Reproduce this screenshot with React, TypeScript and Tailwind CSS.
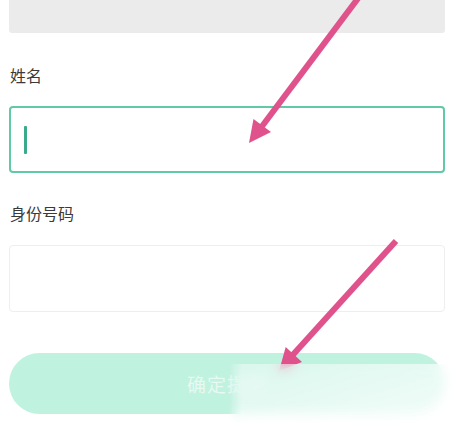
import React from "react";

export default function App() {
  return (
    <div
      className="relative w-[455px] h-[427px] overflow-hidden bg-white"
      style={{ fontFamily: '"Noto Sans CJK SC", "Noto Sans", sans-serif' }}
    >
      <div className="flex flex-col px-[9px] pr-[10px]">
        <div className="h-[33px] bg-[#ebebeb] rounded-b-[3px]" />
        <div className="mt-[31px] h-[22px] flex items-center pl-[1px] text-[16px] leading-none text-[#3a3a3a]">
          姓名
        </div>
        <div className="mt-[20px] h-[67px] rounded-[4px] border-2 border-[#62c9a6] flex items-center pl-[13px]">
          <div className="w-[3px] h-[28px] bg-[#3aaa8c] rounded-[1px]" />
        </div>
        <div className="mt-[29px] h-[22px] flex items-center pl-[1px] text-[16px] leading-none text-[#3a3a3a]">
          身份号码
        </div>
        <div className="mt-[21px] h-[67px] rounded-[4px] border border-[#eeeeee]" />
        <div className="mt-[41px] h-[61px] rounded-full bg-[#c0f2e0] flex items-center justify-center pt-[2px] text-[19px] tracking-[1px] text-[#e6f9f2]">
          确定提交
        </div>
      </div>

      <svg className="absolute inset-0" width="455" height="427" viewBox="0 0 455 427">
        <line x1="359" y1="-3" x2="260" y2="129" stroke="#e0528b" strokeWidth="6" />
        <polygon points="249,143 271,132 253.5,119" fill="#e0528b" />
        <line x1="396" y1="241" x2="290" y2="358" stroke="#e0528b" strokeWidth="6" />
        <polygon points="279,371 302,362 285.7,347" fill="#e0528b" />
      </svg>

      <div className="absolute left-[228px] top-[364px] w-[250px] h-[75px] backdrop-blur-[6px] bg-gradient-to-br from-white/40 via-white/65 to-white/90 [mask-image:linear-gradient(to_right,transparent_0px,black_14px)]" />
    </div>
  );
}
